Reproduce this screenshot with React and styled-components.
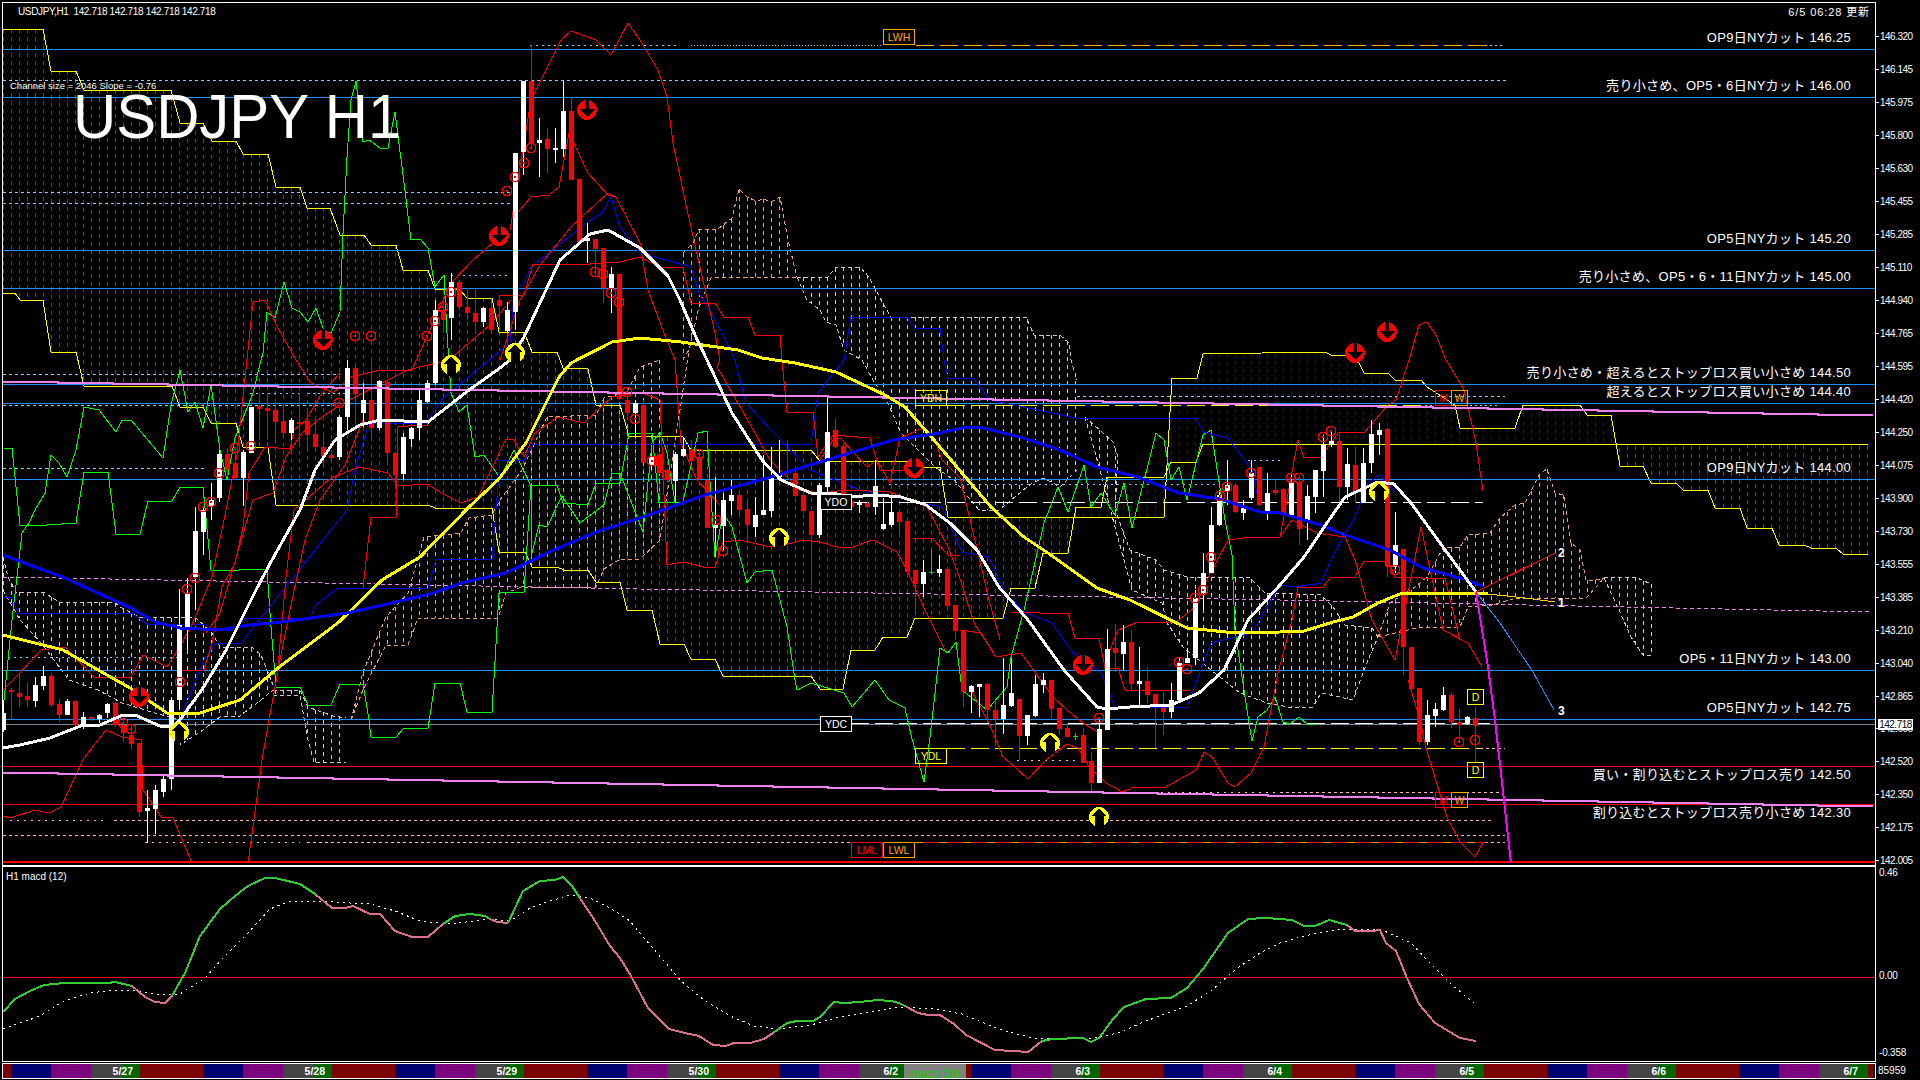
import React from 'react'
import styled, { createGlobalStyle } from 'styled-components'

const GlobalStyle = createGlobalStyle`
  html, body { margin: 0; padding: 0; background: #000; }
  body { font-family: "Liberation Sans", "Noto Sans CJK JP", sans-serif; color: #fff; }
`

const Page = styled.div`
  width: 1920px;
  height: 1080px;
  padding: 2px 0 0 2px;
  box-sizing: border-box;
  background: #000;
  overflow: hidden;
`
const Row = styled.div`
  display: flex;
  height: ${p => p.$h}px;
`
const Pane = styled.div`
  position: relative;
  width: 1874px;
  height: 100%;
  box-sizing: border-box;
  flex: none;
  border: 1px solid #fff;
  overflow: hidden;
  svg { display: block; shape-rendering: crispEdges; }
`
const PriceAxis = styled.div`
  position: relative;
  flex: 1;
  padding-top: 18.5px;
  font-size: 10px;
  letter-spacing: -0.5px;
`
const Tick = styled.div`
  height: 32.96px;
  display: flex;
  align-items: center;
  gap: 1px;
  &::before { content: ''; width: 3px; height: 1px; background: #fff; }
`
const BidBox = styled.div`
  position: absolute;
  top: 717px;
  left: 2px;
  width: 35px;
  height: 11px;
  line-height: 11px;
  background: #fff;
  color: #000;
  font-size: 10px;
  text-align: center;
`
const MacdAxis = styled.div`
  flex: 1;
  height: 100%;
  padding: 1px 0 0 3px;
  font-size: 10px;
  letter-spacing: -0.2px;
  box-sizing: border-box;
  display: flex;
  flex-direction: column;
`
const MacdValue = styled.div`
  position: relative;
  flex: none;
  height: ${p => p.$h}px;
  line-height: 12px;
  ${p => p.$zero && `
    &::before {
      content: '';
      position: absolute;
      left: 0;
      top: 0;
      width: 5px;
      height: 12px;
      background: #d00;
      z-index: -1;
    }
  `}
`
const TopBar = styled.div`
  position: absolute;
  top: 3px;
  left: 15px;
  right: 5px;
  display: flex;
  justify-content: space-between;
  font-size: 10px;
  line-height: 12px;
`
const HeaderText = styled.span`
  letter-spacing: -0.35px;
  white-space: pre;
`
const UpdatedText = styled.span`
  font-size: 11px;
  letter-spacing: 0.9px;
`
const BigTitle = styled.span`
  position: absolute;
  left: 70px;
  top: 77px;
  font-size: 63px;
  line-height: 72px;
  white-space: nowrap;
  transform: scaleX(0.95);
  transform-origin: left center;
`
const ChannelText = styled.span`
  position: absolute;
  left: 7px;
  top: 77px;
  font-size: 9.5px;
  line-height: 12px;
`
const LevelLabel = styled.span`
  position: absolute;
  right: 24px;
  top: ${p => p.$y - 11}px;
  font-size: 13px;
  line-height: 16px;
  letter-spacing: 0.3px;
  white-space: nowrap;
`
const Tag = styled.span`
  position: absolute;
  left: ${p => p.$x - 3}px;
  top: ${p => p.$y - 3}px;
  width: ${p => p.$w || 32}px;
  height: 16px;
  box-sizing: border-box;
  border: 1px solid ${p => p.$c};
  background: ${p => (p.$solid ? '#000' : 'transparent')};
  color: ${p => p.$c};
  font-size: 10.5px;
  line-height: 14px;
  text-align: center;
`
const WaveNo = styled.span`
  position: absolute;
  left: ${p => p.$x - 3}px;
  top: ${p => p.$y - 10}px;
  font-size: 12px;
  line-height: 14px;
  font-weight: 700;
`
const PaneTitle = styled.span`
  position: absolute;
  left: 3px;
  top: 4px;
  font-size: 10px;
  line-height: 12px;
`
const TimeRow = styled.div`
  display: flex;
  margin-top: 1px;
  height: 16px;
`
const TimeStrip = styled.div`
  position: relative;
  width: 1874px;
  box-sizing: border-box;
  flex: none;
  display: flex;
  border: 1px solid #fff;
`
const Band = styled.div`
  flex: none;
  width: ${p => p.$w}px;
  background-color: ${p => p.$c};
  background-image: repeating-conic-gradient(rgba(0, 0, 0, 0.22) 0 25%, transparent 0 50%);
  background-size: 2px 2px;
`
const DayBand = styled.div`
  flex: none;
  width: 49px;
  box-sizing: border-box;
  padding-right: ${p => (p.$short ? 10 : 7)}px;
  text-align: right;
  font-size: 10.5px;
  line-height: 14px;
  font-weight: 700;
  background: linear-gradient(90deg, #444 0 31px, #006400 31px);
`
const MacdButton = styled.div`
  position: absolute;
  left: 901px;
  top: 0;
  width: 62px;
  height: 14px;
  overflow: hidden;
  background: #808080;
  color: #00d000;
  font-size: 12px;
  line-height: 21px;
  text-align: center;
`
const ServerCode = styled.div`
  padding-left: 2px;
  font-size: 10px;
  line-height: 16px;
`

const AXIS = '146.320 146.145 145.975 145.800 145.630 145.455 145.285 145.110 144.940 144.765 144.595 144.420 144.250 144.075 143.900 143.730 143.555 143.385 143.210 143.040 142.865 142.695 142.520 142.350 142.175 142.005'.split(' ')

const LEVELS = [
  [38, 'OP9日NYカット 146.25'],
  [86, '売り小さめ、OP5・6日NYカット 146.00'],
  [239, 'OP5日NYカット 145.20'],
  [277, '売り小さめ、OP5・6・11日NYカット 145.00'],
  [373, '売り小さめ・超えるとストップロス買い小さめ 144.50'],
  [392, '超えるとストップロス買い小さめ 144.40'],
  [468, 'OP9日NYカット 144.00'],
  [659, 'OP5・11日NYカット 143.00'],
  [708, 'OP5日NYカット 142.75'],
  [775, '買い・割り込むとストップロス売り 142.50'],
  [813, '割り込むとストップロス売り小さめ 142.30'],
]

const TAGS = [
  ['LWH', 883, 29, '#ffa500'],
  ['YDH', 915, 390, '#ffff00'],
  ['YDO', 820, 494, '#fff', 1],
  ['YDC', 820, 716, '#fff', 1],
  ['YDL', 915, 748, '#ffff00'],
  ['LML', 851, 842, '#ff0000'],
  ['LWL', 883, 842, '#ffa500'],
  ['M', 1435, 390, '#ff0000'],
  ['W', 1451, 390, '#ffa500'],
  ['M', 1435, 792, '#ff0000'],
  ['W', 1451, 792, '#ffa500'],
  ['D', 1467, 689, '#ffff00'],
  ['D', 1467, 762, '#ffff00'],
]

const DAYS = ['5/27', '5/28', '5/29', '5/30', '6/2', '6/3', '6/4', '6/5', '6/6', '6/7']

// x = 3 + 8k; [k, white, bodyTop, bodyBottom, high, low]
const CANDLES = [
  [0,1,713,730,700,732],[1,0,690,692,688,720],[2,0,693,697,674,707],[3,0,696,700,682,707],[4,1,685,701,677,707],[5,1,676,686,666,690],
  [6,0,676,705,673,707],[7,0,704,715,699,722],[8,1,701,715,699,715],[9,0,701,725,700,726],[10,1,717,725,712,729],[11,0,717,719,716,721],
  [12,1,715,719,714,723],[13,1,704,713,703,718],[14,0,703,725,702,727],[15,0,725,733,718,742],[16,0,735,744,725,750],[17,0,743,812,743,817],
  [18,1,808,811,790,843],[19,1,790,809,785,834],[20,1,779,792,776,797],[21,1,700,779,697,790],[22,1,625,700,589,710],[23,1,593,627,578,650],
  [24,1,531,577,507,610],[25,1,510,532,507,555],[26,1,500,507,483,520],[27,1,454,498,450,502],[28,0,454,470,448,477],[29,0,463,478,448,480],
  [30,1,452,478,450,506],[31,1,407,453,407,453],[32,0,406,409,393,440],[33,0,408,411,393,440],[34,0,410,422,403,440],[35,0,421,433,403,435],
  [36,1,420,433,418,440],[37,0,422,424,393,443],[38,0,421,435,410,450],[39,0,434,447,420,450],[40,0,447,456,435,467],[41,0,455,458,450,460],
  [42,1,417,457,415,460],[43,1,368,417,360,430],[44,0,368,394,363,427],[45,1,400,413,383,427],[46,0,400,428,360,437],[47,1,381,428,380,430],
  [48,0,382,453,380,465],[49,0,453,475,452,485],[50,1,437,474,433,480],[51,1,428,439,427,447],[52,1,400,428,390,440],[53,1,383,402,380,403],
  [54,1,310,383,300,385],[55,0,310,320,303,330],[56,1,282,318,273,340],[57,0,282,307,280,310],[58,0,307,313,288,320],[59,0,313,322,288,333],
  [60,1,308,322,307,327],[61,0,308,330,298,330],[62,0,300,306,298,315],[63,1,310,331,302,333],[64,1,153,312,153,330],[65,1,81,152,81,175],
  [66,0,81,144,45,150],[67,1,140,143,118,177],[68,0,139,149,128,173],[69,1,148,150,128,163],[70,1,111,149,81,157],[71,0,111,180,97,180],
  [72,0,179,242,179,242],[73,1,238,241,223,263],[74,0,239,249,240,277],[75,0,248,288,248,303],[76,1,274,289,267,313],[77,0,274,399,274,400],
  [78,0,400,413,388,420],[79,1,403,413,400,438],[80,0,405,463,400,463],[81,1,457,465,454,470],[82,0,454,473,453,474],[83,0,470,480,468,482],
  [84,1,454,481,452,502],[85,1,449,456,437,457],[86,0,449,461,440,463],[87,0,457,479,450,480],[88,0,480,528,480,528],[89,1,525,528,477,557],
  [90,1,500,526,493,550],[91,1,495,501,480,515],[92,0,495,510,490,515],[93,0,509,525,500,543],[94,1,515,527,497,537],[95,1,510,515,455,515],
  [96,1,476,511,447,517],[97,1,473,477,440,480],[98,0,471,473,440,475],[99,0,473,496,467,497],[100,0,495,511,493,513],[101,0,511,535,512,585],
  [102,1,485,535,483,538],[103,1,432,487,397,493],[104,0,430,447,418,448],[105,0,446,497,443,497],[106,0,501,507,499,509],[107,1,503,505,500,513],
  [108,0,503,507,502,508],[109,1,486,507,460,515],[110,1,524,529,498,530],[111,1,512,525,497,527],[112,0,512,522,510,533],[113,0,521,572,520,572],
  [114,0,570,584,570,613],[115,1,572,584,560,597],[116,2,572,573,550,574],[117,1,569,573,555,577],[118,0,569,606,568,607],[119,0,605,631,605,640],
  [120,0,630,692,630,707],[121,1,686,692,685,713],[122,1,684,687,684,717],[123,0,684,710,683,722],[124,0,710,719,700,746],[125,1,705,719,658,734],
  [126,1,693,706,658,707],[127,0,699,736,699,760],[128,1,715,736,715,745],[129,1,684,716,675,717],[130,1,680,685,673,693],[131,0,680,709,680,720],
  [132,0,708,729,708,735],[133,0,728,737,723,737],[134,2,736,737,733,740],[135,0,735,763,728,763],[136,0,761,783,752,792],[137,1,729,783,720,783],
  [138,1,649,730,629,730],[139,0,648,653,624,672],[140,1,642,654,625,670],[141,0,642,684,630,690],[142,1,681,684,647,707],[143,0,681,695,667,703],
  [144,0,694,705,694,748],[145,0,708,712,692,735],[146,1,700,712,683,718],[147,1,663,700,658,700],[148,1,658,663,648,663],[149,1,598,658,590,665],
  [150,1,573,593,553,610],[151,1,525,573,507,573],[152,1,495,525,490,526],[153,1,485,491,460,505],[154,0,485,512,483,513],[155,1,507,513,500,520],
  [156,1,473,498,460,500],[157,0,467,505,467,506],[158,1,493,512,473,520],[159,0,490,493,480,495],[160,0,489,513,488,517],[161,1,483,515,475,517],
  [162,0,482,529,475,545],[163,1,496,520,485,540],[164,1,470,497,470,513],[165,1,444,471,435,497],[166,1,441,445,430,447],[167,0,441,487,433,502],
  [168,1,464,487,448,500],[169,0,465,493,447,503],[170,1,463,503,448,503],[171,1,434,463,420,473],[172,1,430,435,423,455],[173,0,429,567,428,577],
  [174,1,545,567,512,573],[175,0,549,647,549,675],[176,0,647,689,647,690],[177,0,688,742,688,745],[178,1,715,742,700,745],[179,1,709,716,703,727],
  [180,1,695,710,687,711],[181,0,695,722,692,728],[182,0,722,725,709,743],[183,1,717,724,716,725],[184,0,718,726,707,762],
]

const YELLOW_A = '3,29 43,29 51,71 76,71 84,90 171,90 180,123 203,123 212,141 236,141 243,154 268,154 276,187 300,187 307,208 330,208 340,235 364,235 371,245 396,245 403,270 428,270 435,289 459,289 467,298 492,298 499,332 524,332 532,352 557,352 563,368 588,369 596,405 620,405 629,436 683,437 691,450 811,450 820,461 907,461 915,467 940,467 948,517 1164,517 1172,378 1197,378 1203,354 1262,353 1294,352 1325,352 1331,355 1355,355 1364,373 1388,373 1395,380 1421,380 1427,387 1455,405 1460,428 1515,428 1523,405 1580,405 1587,415 1611,415 1620,466 1643,466 1651,483 1676,483 1683,490 1708,490 1715,508 1740,508 1747,528 1772,528 1779,545 1804,545 1811,548 1836,548 1843,554 1868,554'
const YELLOW_B = '3,293 15,293 20,300 43,300 51,352 76,352 84,386 172,386 180,407 203,407 211,423 236,423 243,447 268,447 276,505 428,505 435,508 492,508 499,552 525,552 532,567 557,567 564,570 588,570 596,582 620,582 627,610 652,610 660,644 684,644 691,659 715,659 723,676 811,676 820,689 843,689 851,650 875,650 883,637 907,637 915,618 1003,618 1011,588 1035,588 1043,553 1068,553 1076,507 1101,507 1107,477 1164,477 1171,462 1196,462 1203,444 1868,444'

const PALE = '#d6c4d2'
const AMBER = '#e8a468'

// the thin cloud: [hatch colour, top edge, bottom edge]
const THIN_CLOUDS = [
  [PALE, '3,557 8,577 16,592 44,592 51,597 59,602 114,602 122,608 139,617 196,618 212,633 220,647 253,648 261,655 273,685', '3,590 20,620 41,643 69,680 98,690 122,703 155,713 180,720 180,745 203,730 220,717 240,716 261,700 273,690'],
  [PALE, '273,690 300,690 308,707 333,716 346,718', '273,695 300,695 308,740 314,762 339,762 346,762'],
  [AMBER, '351,720 363,672 386,617 408,593 424,537 461,533 469,518 492,515 500,500 522,470 547,417 596,415 604,398 627,392 640,367 660,360', '351,720 363,690 386,645 408,645 418,618 498,618 506,593 522,587 596,587 604,569 620,559 640,559 660,540 680,410 689,350'],
  [AMBER, '683,253 693,243 699,229 718,229 732,218 739,189 747,197 756,201 764,199 771,202 780,197 788,240 797,277', '683,360 689,350 699,307 711,278 797,277'],
  [PALE, '797,277 828,277 836,267 860,267 869,277 885,307 891,317 1026,317 1034,335 1060,335 1069,343 1071,360 1077,380', '797,277 807,300 820,310 826,322 836,325 844,350 862,360 873,380 885,397 901,433 935,467 954,480 979,510 999,510 1032,483 1044,478 1060,487 1077,470'],
  [PALE, '1085,417 1113,442 1118,457 1115,510 1130,550 1156,560 1164,570 1187,577 1250,578 1265,593 1321,595 1333,607 1345,625 1372,628 1378,637', '1085,417 1100,470 1115,527 1132,590 1162,603 1167,623 1183,647 1211,670 1240,693 1267,703 1288,707 1313,707 1321,693 1353,700 1368,660 1378,637'],
  [AMBER, '1378,637 1390,603 1415,587 1427,577 1443,548 1460,547 1468,535 1490,533 1500,518 1515,505 1525,503 1539,475 1547,469 1555,493 1564,495 1571,543 1580,550 1586,580 1596,580 1604,578', '1378,637 1421,627 1460,627 1468,607 1492,605 1517,598 1586,598 1596,587 1604,578'],
  [PALE, '1604,577 1635,577 1651,584', '1604,578 1619,610 1631,637 1643,655 1651,655'],
]

const BLUE_LEVELS = [49, 97, 250, 288, 384, 403, 479, 670, 719]
const RED_LEVELS = [766, 804]

// [y, x1, x2, colour, dash]
const SEGMENTS = [
  [45, 530, 680, '#87cefa', '2 4'],
  [45, 691, 882, '#87cefa', '1 2'],
  [45, 916, 1485, '#ffa500', '18 6'],
  [45, 1485, 1505, '#87cefa', '2 3'],
  [80, 3, 1506, '#87cefa', '3 3'],
  [192, 3, 510, '#87cefa', '3 3'],
  [203, 3, 512, '#87cefa', '3 3'],
  [275, 451, 510, '#87cefa', '2 4'],
  [374, 3, 340, '#87cefa', '3 3'],
  [405, 3, 340, '#87cefa', '3 3'],
  [393, 250, 300, '#87cefa', '2 4'],
  [393, 308, 345, '#87cefa', '2 3'],
  [468, 3, 205, '#87cefa', '3 3'],
  [657, 8, 180, '#87cefa', '2 4'],
  [396, 1077, 1505, '#87cefa', '3 3'],
  [405, 947, 1425, '#ffff00', '18 6'],
  [405, 1425, 1500, '#87cefa', '2 3'],
  [484, 889, 1220, '#87cefa', '2 4'],
  [460, 1248, 1280, '#87cefa', '2 4'],
  [502, 851, 1483, '#ffffff', '18 6'],
  [723, 851, 1490, '#ffffff', '18 6'],
  [748, 947, 1480, '#ffff00', '18 6'],
  [748, 1480, 1505, '#ffb6c1', '3 3'],
  [820, 10, 106, '#ffb6c1', '2 5'],
  [820, 114, 1494, '#ffb6c1', '3 3'],
  [835, 3, 1505, '#ffb6c1', '3 3'],
  [842, 145, 300, '#ffb6c1', '2 5'],
  [842, 307, 851, '#ffb6c1', '3 3'],
  [842, 915, 1485, '#ff0000'],
  [842, 915, 1485, '#ffa500', '8 16'],
  [842, 1485, 1505, '#ffb6c1', '3 3'],
  [792, 1105, 1280, '#ffb6c1', '2 5'],
  [792, 1280, 1502, '#ffb6c1', '3 3'],
  [760, 1017, 1080, '#ffc0d0', '2 5'],
]

const BOLL = [
  '3,690 20,673 41,650 65,647 94,677 131,677 143,655 167,667 176,653 192,625 212,577 224,520 237,455 253,302 265,300 278,328 296,360 310,382 333,393 351,377 380,370 412,370 451,283 473,260 500,237',
  '180,670 204,670 212,643 222,587 235,563 243,527 249,473 265,447 290,449 294,430 306,420 322,393 340,373',
  '206,633 220,613 253,500 273,493 286,457 302,433 322,417 343,403 408,370 449,360 490,325 511,300',
  '278,667 286,577 294,510 331,478 359,467 388,473 398,486 427,484 445,495 461,503 478,497 506,439 514,440 524,457 535,433 558,417 584,423 612,397 640,392 660,400 667,565 683,562 707,568 715,567 723,542 740,540 770,547 788,544 803,540 820,542 840,548 853,547 873,540 897,552 907,570 925,610 945,650',
  '3,816 10,818 35,810 49,813 61,807 75,777 84,758 106,730 122,737 141,740 143,790 161,817 173,818 192,863',
  '248,863 262,760 269,720 280,660 290,610 305,540 320,500 345,465 363,420',
  '500,360 520,300 540,265 571,227 608,193 616,197 640,243 648,290 664,333 675,360 681,443 697,480 720,505',
  '510,230 531,100 561,40 571,31 596,40 611,55 628,23 640,40 658,70 667,97 673,143 685,200 699,263 715,333 720,360 717,367 742,410 770,460 800,490 820,493 847,490 890,492 927,507 948,547 958,573 975,625 996,657',
  '514,217 531,197 549,195 559,187 569,133 588,173 608,195 616,197',
  '820,460 833,440 840,438 867,467 877,460 890,483 900,438 923,428 933,435 942,460 960,478 975,540 989,600 1000,640',
  '960,630 981,633 996,657 1021,653 1053,697 1067,710 1083,723 1099,733',
  '971,690 989,723 1003,757 1015,767 1028,779 1046,760 1067,744 1078,748 1090,768 1106,783 1122,792 1135,787 1164,788 1196,770 1204,752 1212,757 1228,783 1235,787 1251,773 1264,747 1278,673 1292,620 1298,587',
  '1107,657 1118,630 1138,622 1175,623 1195,607 1207,580 1228,540 1252,537 1280,537 1298,440 1304,458 1321,457 1339,432 1364,433 1388,405 1396,400 1409,360 1419,325 1427,322 1437,337 1445,358 1464,390 1476,443 1483,491',
  '1280,537 1292,520 1317,533 1345,537 1355,560 1372,620 1395,660 1421,527 1443,630 1468,643 1482,667',
  '1426,748 1447,817 1460,842 1475,857 1483,843',
  '1408,680 1420,720 1426,748',
]

const STEPS = [
  '499,330 499,295 524,295 533,264 590,264 620,262 640,257 660,267 683,267 691,303 715,303 724,317 748,317 755,335 780,335 782,360 787,412 813,412 818,457 833,435 870,438 880,470 920,470',
  '363,588 371,517 396,517 398,427 418,425 428,425',
  '180,670 204,670',
  '913,538 932,538 948,555 960,555',
  '1011,612 1040,613 1068,613 1075,638 1099,638 1105,668 1118,668 1125,690 1190,690',
  '1298,587 1323,587 1331,577 1355,577 1364,561 1388,561 1395,577 1421,578 1445,578 1460,640',
]

const BLUE_THIN = [
  '3,597 12,597 18,613 131,613 147,624 204,624 212,630 237,630 244,618 310,618 316,605 331,593 339,588 428,588 436,559 492,559 500,460 524,460 533,444 811,444 818,393 844,360 851,317 907,317 915,328 940,328 944,360 948,378 973,378 990,400 1076,418 1196,418 1203,432 1228,438 1252,470 1260,507',
  '180,720 204,660 216,643 241,643 347,510 355,470 369,423 426,423 443,398 510,343 514,293 524,283 531,267 588,222 602,213 611,197 620,227 640,253 691,267 699,293 711,313 722,333 735,360 746,403 771,430 810,470 860,490 942,507 962,552 989,557 1005,593 1026,613 1052,623 1073,653 1101,673 1115,707 1187,707 1211,643 1252,633 1280,585 1296,587 1321,583 1331,560 1345,533 1355,517 1368,483 1380,475 1395,492',
]

const GREEN = [
  '4,700 12,620 22,533 29,523 35,510 45,493 51,455 59,463 67,477 76,450 84,407 99,410 116,432 122,420 131,420 163,458 171,405 180,370 188,412 195,402 203,428 211,385 220,450 227,480 235,438 253,393 261,360 263,353 267,312 275,318 284,282 292,308 300,312 308,322 316,308 324,331 331,333 340,312 343,233 347,157 351,100 356,81 363,142 369,140 380,148 388,148 395,112 404,183 411,240 420,239 428,248 435,287 444,275 447,333 451,393 459,412 467,405 475,457 484,455 500,478 514,450 531,486 531,557 539,525 547,527 562,496 580,523 604,505 612,473 620,473 637,517 643,532 652,443 660,432 667,453 675,502',
  '4,448 12,448 20,525 47,525 76,523 84,472 108,472 116,534 140,534 148,501 172,501 180,487 203,487 211,570 239,570 267,569 271,627 276,687 300,687 308,705 331,705 340,684 363,684 369,720 371,737 396,737 404,728 428,728 435,683 460,683 467,712 492,712 499,593 524,592 531,485 557,485 563,503 588,505 596,483 620,483 629,433 652,433 659,503 683,502 698,433 707,431 709,467 715,557 723,513 732,527 747,583 755,572 772,570 787,627 795,680 797,690 811,683 844,693 852,707 875,680 889,700 905,708 911,735 924,782 930,737 932,720 940,648 948,653 956,642 962,690 987,710 1007,687 1011,657 1024,610 1044,523 1058,487 1068,512 1084,465 1091,507 1101,493 1115,515 1124,483 1132,528 1156,433 1164,440 1171,480 1179,467 1187,500 1203,435 1211,430 1225,520 1232,555 1235,630 1249,723 1252,741 1258,717 1267,710 1275,697 1283,722 1290,724 1299,717 1308,725 1315,724',
]

const WHITE_MA = '3,748 20,745 50,738 83,725 100,725 123,715 135,715 160,726 172,727 180,720 190,706 203,688 226,650 256,590 272,560 300,510 315,470 335,440 360,425 380,420 428,422 469,390 500,368 510,360 524,337 560,260 590,234 608,230 640,248 668,276 680,300 695,335 707,360 732,413 762,460 781,480 811,493 832,493 850,497 877,495 901,497 926,505 950,523 977,550 999,587 1028,620 1064,670 1097,707 1107,709 1130,707 1171,705 1199,693 1224,670 1248,620 1280,585 1304,557 1329,520 1345,497 1378,482 1394,484 1411,503 1443,547 1476,592'
const YELLOW_MA = '3,635 63,650 130,688 167,713 200,713 240,700 278,668 339,622 382,580 420,557 469,507 498,480 526,443 559,377 571,363 612,342 640,338 681,342 738,350 762,358 795,363 836,372 885,395 905,407 934,440 962,473 991,507 1024,537 1048,553 1097,588 1130,600 1187,628 1236,633 1280,632 1304,631 1333,622 1353,617 1378,603 1400,594 1427,593 1488,594'
const BLUE_MA = '3,555 65,578 131,608 155,622 180,628 220,630 249,625 282,622 347,613 392,603 433,593 465,582 506,573 547,553 596,532 640,518 705,495 771,477 820,462 893,440 934,434 967,427 979,427 1020,437 1060,450 1097,467 1138,477 1179,493 1220,499 1260,512 1280,513 1321,525 1345,535 1390,550 1423,568 1460,578 1483,586'

const MACD_GREEN = [
  '3,1011 15,998 30,990 44,984 64,982 108,982 115,981 132,985',
  '172,995 185,972 200,935 220,908 235,895 248,885 265,877 275,877 300,883 315,893',
  '443,923 455,915 470,913 485,915 490,918',
  '508,922 523,890 540,880 555,879 563,876 572,885 580,897',
  '773,1032 787,1022 797,1020 813,1020 820,1016 834,1001 844,1002 860,1001 877,999 891,1000 899,1002 905,1005',
  '1042,1040 1052,1038 1083,1037 1091,1041 1099,1037 1113,1018 1124,1006 1146,998 1171,997 1187,987 1203,968 1228,932 1248,918 1265,917 1280,918 1292,919 1304,925 1315,925 1329,919 1347,924',
]
const MACD_PINK = [
  '132,985 145,996 155,1001 165,1002 172,995',
  '315,893 332,907 345,907 353,905 370,913 380,913 395,930 412,936 428,936 443,923',
  '490,918 497,921 508,922',
  '580,897 595,920 610,945 620,957 631,975 640,992 648,1007 669,1028 685,1032 699,1035 713,1044 726,1045 734,1042 750,1042 764,1038 773,1032',
  '905,1005 918,1012 928,1014 940,1014 954,1023 966,1034 995,1049 1013,1050 1028,1051 1042,1040',
  '1347,924 1355,930 1372,930 1380,929 1386,942 1396,950 1407,977 1419,1003 1435,1022 1460,1037 1476,1040',
]
const MACD_SIGNAL = '3,1028 40,1015 64,1000 90,992 115,989 133,989 155,993 180,993 205,977 225,955 245,935 270,908 290,900 320,900 350,902 370,903 395,910 420,920 450,923 490,918 510,920 530,907 550,900 570,894 590,897 610,907 630,920 644,937 664,960 681,980 705,1000 730,1015 754,1025 779,1028 811,1024 836,1017 869,1011 901,1006 934,1008 962,1013 999,1028 1032,1037 1089,1038 1118,1032 1146,1020 1187,1005 1211,990 1236,968 1260,952 1280,942 1304,935 1325,931 1341,928 1382,929 1411,942 1431,963 1451,983 1475,1003'

const CIRCLES = '531,148 524,163 515,177 507,191 595,272 603,274 611,293 619,302 355,336 371,336 427,336 443,307 435,321 451,292 180,682 187,589 195,578 203,507 211,502 219,473 235,448 251,446 339,403 627,392 635,419 652,461 659,461 667,475 699,454 716,520 723,551 123,723 131,729 1099,718 1179,662 1187,669 1459,742 1475,740 1195,598 1203,590 1211,557 1220,496 1227,487 1251,473 1291,478 1299,478 1323,437 1331,431 1395,570'

const RED_ARROWS = [[587,110],[499,236],[323,340],[1387,332],[1355,353],[139,697],[914,468],[1083,665]]
const YELLOW_ARROWS = [[515,353],[451,365],[779,538],[1379,492],[1050,743],[1099,817],[179,732]]

const toPoints = s => s.split(' ').map(p => p.split(',').map(Number))

const edgeAt = (pts, x) => {
  if (x < pts[0][0] || x > pts[pts.length - 1][0]) return null
  for (let i = 1; i < pts.length; i++) {
    if (x <= pts[i][0]) {
      const [x0, y0] = pts[i - 1]
      const [x1, y1] = pts[i]
      return x1 === x0 ? y1 : y0 + ((y1 - y0) * (x - x0)) / (x1 - x0)
    }
  }
  return null
}

const stepped = (startY, endY) => {
  const pts = []
  const count = 34
  for (let i = 0; i < count; i++) {
    const y = Math.round(startY + ((endY - startY) * i) / (count - 1))
    pts.push(`${3 + i * 55},${y} ${3 + (i + 1) * 55},${y}`)
  }
  return pts.join(' ')
}

function Hatch({ top, bottom, colorAt }) {
  const a = toPoints(top)
  const b = toPoints(bottom)
  const out = []
  for (let k = 0; k < 235; k++) {
    const x = 3 + 8 * k
    const y1 = edgeAt(a, x)
    const y2 = edgeAt(b, x)
    if (y1 === null || y2 === null) continue
    out.push(<line key={k} x1={x} x2={x} y1={y1} y2={y2} stroke={colorAt(x)} strokeDasharray="4 4" />)
  }
  return <g>{out}</g>
}

const Lines = ({ list, color, width = 1, dash }) =>
  list.map((points, i) => (
    <polyline key={i} points={points} fill="none" stroke={color} strokeWidth={width} strokeDasharray={dash} />
  ))

function Candle({ k, kind, top, bottom, high, low }) {
  const x = 3 + 8 * k
  const color = kind === 1 ? '#fff' : kind === 2 ? '#00e000' : '#ff0000'
  return (
    <g>
      <rect x={x} y={high} width="1" height={low - high} fill={color} />
      <rect x={x - 2} y={top} width="5" height={Math.max(bottom - top, 1)} fill={color} />
    </g>
  )
}

// wingdings-like arrow in a disc, the way the terminal paints its signals
function ArrowMark({ x, y, color, up }) {
  const d = up
    ? 'M0,-8 L8,-1 L4.5,-1 L4.5,11 L-4.5,11 L-4.5,-1 L-8,-1 Z'
    : 'M0,7 L8,-1 L2,-1 L2,-11 L-2,-11 L-2,-1 L-8,-1 Z'
  return (
    <g transform={`translate(${x} ${y})`}>
      <ellipse rx="10" ry="10" fill={color} />
      <path d={d} fill="#000" />
    </g>
  )
}

function CirclePin({ x, y }) {
  return (
    <g>
      <circle cx={x} cy={y} r="4.5" fill="none" stroke="#ff0000" strokeWidth="1.5" />
      <circle cx={x} cy={y} r="1.5" fill="#ff0000" />
    </g>
  )
}

function PriceChart() {
  return (
    <svg width="1872" height="862" viewBox="3 3 1872 862">
      <Hatch top={YELLOW_A} bottom={YELLOW_B} colorAt={x => (x > 1075 && x < 1616 ? '#0000ff' : '#ff0000')} />
      {THIN_CLOUDS.map(([color, top, bottom], i) => (
        <g key={i}>
          <Hatch top={top} bottom={bottom} colorAt={() => color} />
          <Lines list={[top, bottom]} color={color} dash="4 3" />
        </g>
      ))}
      <Lines list={[YELLOW_A, YELLOW_B]} color="#ffff00" />
      {BLUE_LEVELS.map(y => <line key={y} x1="3" x2="1875" y1={y} y2={y} stroke="#1e90ff" />)}
      {RED_LEVELS.map(y => <line key={y} x1="3" x2="1875" y1={y} y2={y} stroke="#ff0000" />)}
      <line x1="3" x2="1875" y1="862" y2="862" stroke="#ff0000" strokeWidth="2" />
      <line x1="3" x2="1875" y1="724" y2="724" stroke="#778899" />
      {SEGMENTS.map(([y, x1, x2, color, dash], i) => (
        <line key={i} x1={x1} x2={x2} y1={y} y2={y} stroke={color} strokeDasharray={dash} />
      ))}
      <polyline points="3,577 640,589 1280,600 1870,612" fill="none" stroke="#ee82ee" strokeDasharray="4 3" />
      <Lines list={GREEN} color="#00ff00" />
      <Lines list={BLUE_THIN} color="#0000ff" />
      <Lines list={BOLL} color="#ff0000" />
      <Lines list={STEPS} color="#ff0000" />
      {CANDLES.map(([k, kind, top, bottom, high, low]) => (
        <Candle key={k} k={k} kind={kind} top={top} bottom={bottom} high={high} low={low} />
      ))}
      <Lines list={[stepped(382, 415), stepped(773, 806)]} color="#ee82ee" width={2} />
      <Lines list={[YELLOW_MA]} color="#ffff00" width={3} />
      <Lines list={['1488,594 1525,598 1555,602']} color="#ffd000" />
      <Lines list={[BLUE_MA]} color="#0000ff" width={3} />
      <Lines list={[WHITE_MA]} color="#ffffff" width={3} />
      <Lines list={['1476,592 1555,553']} color="#ff0000" />
      <Lines list={['1476,592 1500,623 1533,672 1554,710']} color="#1e90ff" />
      <Lines list={['1476,592 1488,667 1495,720 1511,863']} color="#ff00ff" width={2} />
      {toPoints(CIRCLES).map(([x, y]) => <CirclePin key={`${x}-${y}`} x={x} y={y} />)}
      {RED_ARROWS.map(([x, y]) => <ArrowMark key={x} x={x} y={y} color="#ff0000" />)}
      {YELLOW_ARROWS.map(([x, y]) => <ArrowMark key={x} x={x} y={y} color="#ffff00" up />)}
    </svg>
  )
}

function MacdChart() {
  return (
    <svg width="1872" height="194" viewBox="3 866 1872 194">
      <line x1="3" x2="1875" y1="976" y2="976" stroke="#ff0000" />
      <Lines list={[MACD_SIGNAL]} color="#ffffff" dash="2 4" />
      <Lines list={MACD_GREEN} color="#32cd32" width={2} />
      <Lines list={MACD_PINK} color="#db7093" width={2} />
    </svg>
  )
}

function TimeAxis() {
  return (
    <TimeRow>
      <TimeStrip>
        <Band $w={8} $c="#8b0000" />
        {DAYS.map((day, i) => (
          <React.Fragment key={day}>
            <Band $w={40} $c="#000080" />
            <Band $w={40} $c="#8b008b" />
            <DayBand $short={i >= 4}>{day}</DayBand>
            <Band $w={i === DAYS.length - 1 ? 5 : 63} $c="#8b0000" />
          </React.Fragment>
        ))}
        <MacdButton>macd ON</MacdButton>
      </TimeStrip>
      <ServerCode>85959</ServerCode>
    </TimeRow>
  )
}

export default function App() {
  return (
    <Page>
      <GlobalStyle />
      <Row $h={864}>
        <Pane>
          <PriceChart />
          <TopBar>
            <HeaderText>USDJPY,H1  142.718 142.718 142.718 142.718</HeaderText>
            <UpdatedText>6/5 06:28 更新</UpdatedText>
          </TopBar>
          <ChannelText>Channel size = 2046 Slope = -0.76</ChannelText>
          <BigTitle>USDJPY H1</BigTitle>
          {LEVELS.map(([y, text]) => <LevelLabel key={text} $y={y}>{text}</LevelLabel>)}
          {TAGS.map(([text, x, y, color, solid]) => (
            <Tag key={`${text}${x}${y}`} $x={x} $y={y} $c={color} $solid={solid} $w={text.length === 1 ? 17 : 32}>{text}</Tag>
          ))}
          <WaveNo $x={1558} $y={553}>2</WaveNo>
          <WaveNo $x={1558} $y={603}>1</WaveNo>
          <WaveNo $x={1558} $y={711}>3</WaveNo>
        </Pane>
        <PriceAxis>
          {AXIS.map(value => <Tick key={value}>{value}</Tick>)}
          <BidBox>142.718</BidBox>
        </PriceAxis>
      </Row>
      <Row $h={196}>
        <Pane>
          <MacdChart />
          <PaneTitle>H1  macd (12)</PaneTitle>
        </Pane>
        <MacdAxis>
          <MacdValue $h={103}>0.46</MacdValue>
          <MacdValue $h={77} $zero>0.00</MacdValue>
          <MacdValue $h={12}>-0.358</MacdValue>
        </MacdAxis>
      </Row>
      <TimeAxis />
    </Page>
  )
}
